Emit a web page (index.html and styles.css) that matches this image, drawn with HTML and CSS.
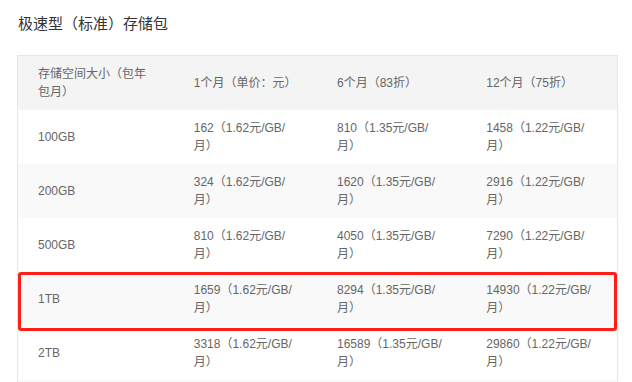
FILE: index.html
```html
<!DOCTYPE html>
<html lang="zh-CN">
<head>
<meta charset="utf-8">
<title>极速型（标准）存储包</title>
<link rel="stylesheet" href="styles.css">
</head>
<body>
<div class="page">
  <h3 class="title">极速型（标准）存储包</h3>
  <div class="table-wrap">
    <table class="price-table">
      <colgroup>
        <col class="c1"><col class="c2"><col class="c3"><col class="c4">
      </colgroup>
      <thead>
        <tr>
          <th>存储空间大小（包年包月）</th>
          <th>1个月（单价：元）</th>
          <th>6个月（83折）</th>
          <th>12个月（75折）</th>
        </tr>
      </thead>
      <tbody>
        <tr>
          <td>100GB</td>
          <td>162（1.62元/GB/月）</td>
          <td>810（1.35元/GB/月）</td>
          <td>1458（1.22元/GB/月）</td>
        </tr>
        <tr>
          <td>200GB</td>
          <td>324（1.62元/GB/月）</td>
          <td>1620（1.35元/GB/月）</td>
          <td>2916（1.22元/GB/月）</td>
        </tr>
        <tr>
          <td>500GB</td>
          <td>810（1.62元/GB/月）</td>
          <td>4050（1.35元/GB/月）</td>
          <td>7290（1.22元/GB/月）</td>
        </tr>
        <tr>
          <td>1TB</td>
          <td>1659（1.62元/GB/月）</td>
          <td>8294（1.35元/GB/月）</td>
          <td>14930（1.22元/GB/月）</td>
        </tr>
        <tr>
          <td>2TB</td>
          <td>3318（1.62元/GB/月）</td>
          <td>16589（1.35元/GB/月）</td>
          <td>29860（1.22元/GB/月）</td>
        </tr>
        <tr class="more" aria-hidden="true">
          <td></td><td></td><td></td><td></td>
        </tr>
      </tbody>
    </table>
    <div class="highlight"></div>
  </div>
</div>
</body>
</html>
```

FILE: styles.css
```css
html, body {
  margin: 0;
  padding: 0;
  background: #fff;
  overflow: hidden;
}

body {
  font-family: "Liberation Sans", "Noto Sans CJK SC", sans-serif;
  color: #666;
}

.page {
  padding: 14px 14px 0 17px;
}

.title {
  margin: 0;
  font-size: 15px;
  line-height: 20px;
  font-weight: normal;
  color: #333;
  padding-left: 1px;
}

.table-wrap {
  position: relative;
  margin-top: 21px;
  width: 601px;
}

.price-table {
  width: 601px;
  table-layout: fixed;
  border-collapse: collapse;
  border: 1px solid #e6e6e6;
  font-size: 12px;
  line-height: 18px;
}

.c1 { width: 156px; }
.c2 { width: 143px; }
.c3 { width: 149px; }
.c4 { width: 151px; }

.price-table th,
.price-table td {
  padding: 9px 20px;
  text-align: left;
  vertical-align: middle;
  font-weight: normal;
  color: #666;
}

.price-table thead tr {
  background: #f4f4f4;
}

.price-table tbody tr:nth-child(even) {
  background: #f9f9f9;
}

.price-table tr.more td {
  height: 36px;
}

.highlight {
  position: absolute;
  left: 1px;
  top: 217px;
  width: 599px;
  height: 59px;
  box-sizing: border-box;
  border: 3px solid #ff1f1a;
  border-radius: 3px;
  pointer-events: none;
}
```
